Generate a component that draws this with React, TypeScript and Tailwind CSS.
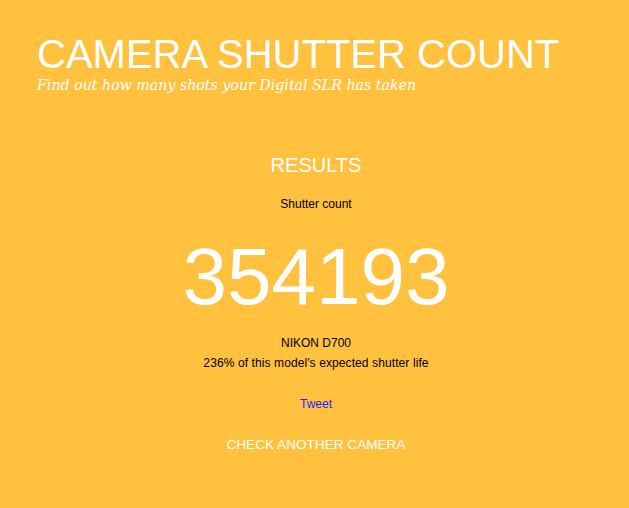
export default function App() {
  return (
    <div className="min-h-[508px] w-full bg-[#ffc13e] text-white" style={{ fontFamily: 'Arial, "Liberation Sans", sans-serif' }}>
      <div className="px-[37px] pt-[32px]">
        <h1 className="text-[40px] leading-[44px] font-normal">CAMERA SHUTTER COUNT</h1>
        <p className="text-[14.2px] leading-[18px] italic" style={{ fontFamily: '"DejaVu Serif", Georgia, serif' }}>
          Find out how many shots your Digital SLR has taken
        </p>
      </div>

      <div className="flex flex-col items-center pt-[59px] pl-[3px] text-center">
        <h2 className="text-[20px] leading-[24px]">RESULTS</h2>
        <div className="mt-[20px] text-[12px] leading-[14px] text-black">Shutter count</div>
        <div className="mt-[20px] text-[80px] leading-[92px]">354193</div>
        <div className="mt-[10px] text-[12px] leading-[20px] text-black">
          <div>NIKON D700</div>
          <div className="tracking-[0.1px]">236% of this model's expected shutter life</div>
        </div>
        <a href="#" className="mt-[24px] text-[12px] leading-[14px] text-[#1f1fff]">Tweet</a>
        <a href="#" className="mt-[26px] text-[13.6px] leading-[16px] text-white">CHECK ANOTHER CAMERA</a>
      </div>
    </div>
  );
}
